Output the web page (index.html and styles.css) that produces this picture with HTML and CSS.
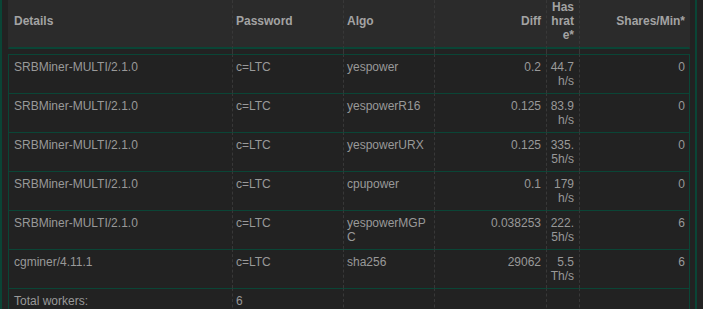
FILE: index.html
```html
<!DOCTYPE html>
<html>
<head>
<meta charset="utf-8">
<link rel="stylesheet" href="styles.css">
</head>
<body>
<div class="wrap">
  <table class="grid">
    <colgroup>
      <col class="c-details"><col class="c-pass"><col class="c-algo"><col class="c-diff"><col class="c-hash"><col class="c-shares">
    </colgroup>
    <thead>
      <tr>
        <th class="first">Details</th>
        <th>Password</th>
        <th>Algo</th>
        <th class="num">Diff</th>
        <th class="num hash">Hashrate*</th>
        <th class="num last">Shares/Min*</th>
      </tr>
    </thead>
    <tbody class="spacer">
      <tr><td class="first"></td><td></td><td></td><td></td><td></td><td class="last"></td></tr>
    </tbody>
    <tbody class="rows">
      <tr><td class="first">SRBMiner-MULTI/2.1.0</td><td>c=LTC</td><td>yespower</td><td class="num">0.2</td><td class="num hash">44.7 h/s</td><td class="num last">0</td></tr>
      <tr><td class="first">SRBMiner-MULTI/2.1.0</td><td>c=LTC</td><td>yespowerR16</td><td class="num">0.125</td><td class="num hash">83.9 h/s</td><td class="num last">0</td></tr>
      <tr><td class="first">SRBMiner-MULTI/2.1.0</td><td>c=LTC</td><td>yespowerURX</td><td class="num">0.125</td><td class="num hash">335.5h/s</td><td class="num last">0</td></tr>
      <tr><td class="first">SRBMiner-MULTI/2.1.0</td><td>c=LTC</td><td>cpupower</td><td class="num">0.1</td><td class="num hash">179 h/s</td><td class="num last">0</td></tr>
      <tr><td class="first">SRBMiner-MULTI/2.1.0</td><td>c=LTC</td><td>yespowerMGPC</td><td class="num">0.038253</td><td class="num hash">222.5h/s</td><td class="num last">6</td></tr>
      <tr><td class="first">cgminer/4.11.1</td><td>c=LTC</td><td>sha256</td><td class="num">29062</td><td class="num hash">5.5 Th/s</td><td class="num last">6</td></tr>
      <tr><td class="first">Total workers:</td><td>6</td><td></td><td></td><td></td><td class="last"></td></tr>
    </tbody>
  </table>
</div>
</body>
</html>
```
FILE: styles.css
```css
html, body {
  margin: 0;
  padding: 0;
  background: #222222;
}
body {
  font-family: "Liberation Sans", Arial, sans-serif;
  font-size: 12px;
  color: #999999;
  overflow: hidden;
}
.wrap {
  box-sizing: border-box;
  width: 697px;
  margin-top: -5px;
  border-left: 2px solid #0a4536;
  border-right: 2px solid #0a4536;
  padding: 0 5px 10px 6px;
}
.grid {
  width: 682px;
  table-layout: fixed;
  border-collapse: separate;
  border-spacing: 0;
}
.c-details { width: 224px; }
.c-pass { width: 111px; }
.c-algo { width: 91px; }
.c-diff { width: 112px; }
.c-hash { width: 33px; }
.c-shares { width: 111px; }

.grid th, .grid td {
  box-sizing: border-box;
  padding: 5px 5px 5px 3px;
  border-left: 1px dashed #383838;
  text-align: left;
  word-break: break-all;
  line-height: normal;
}
.grid th.first, .grid td.first {
  border-left: 1px solid transparent;
  padding-left: 5px;
}
.grid .num { text-align: right; }
.grid .last { padding-right: 4px; }

.grid thead th {
  background: #2b2b2b;
  color: #a3a3a3;
  font-weight: bold;
  vertical-align: middle;
  border-bottom: 2px solid #0a4536;
}
.grid thead th.last { border-right: 1px solid transparent; }

.spacer td {
  height: 5px;
  padding: 0;
}
.spacer td.last { border-right: 1px solid transparent; }

.rows td {
  vertical-align: top;
  border-top: 1px solid #0a4536;
}
.rows td.first { border-left: 1px solid #0a4536; }
.rows td.last { border-right: 1px solid #0a4536; }
```
